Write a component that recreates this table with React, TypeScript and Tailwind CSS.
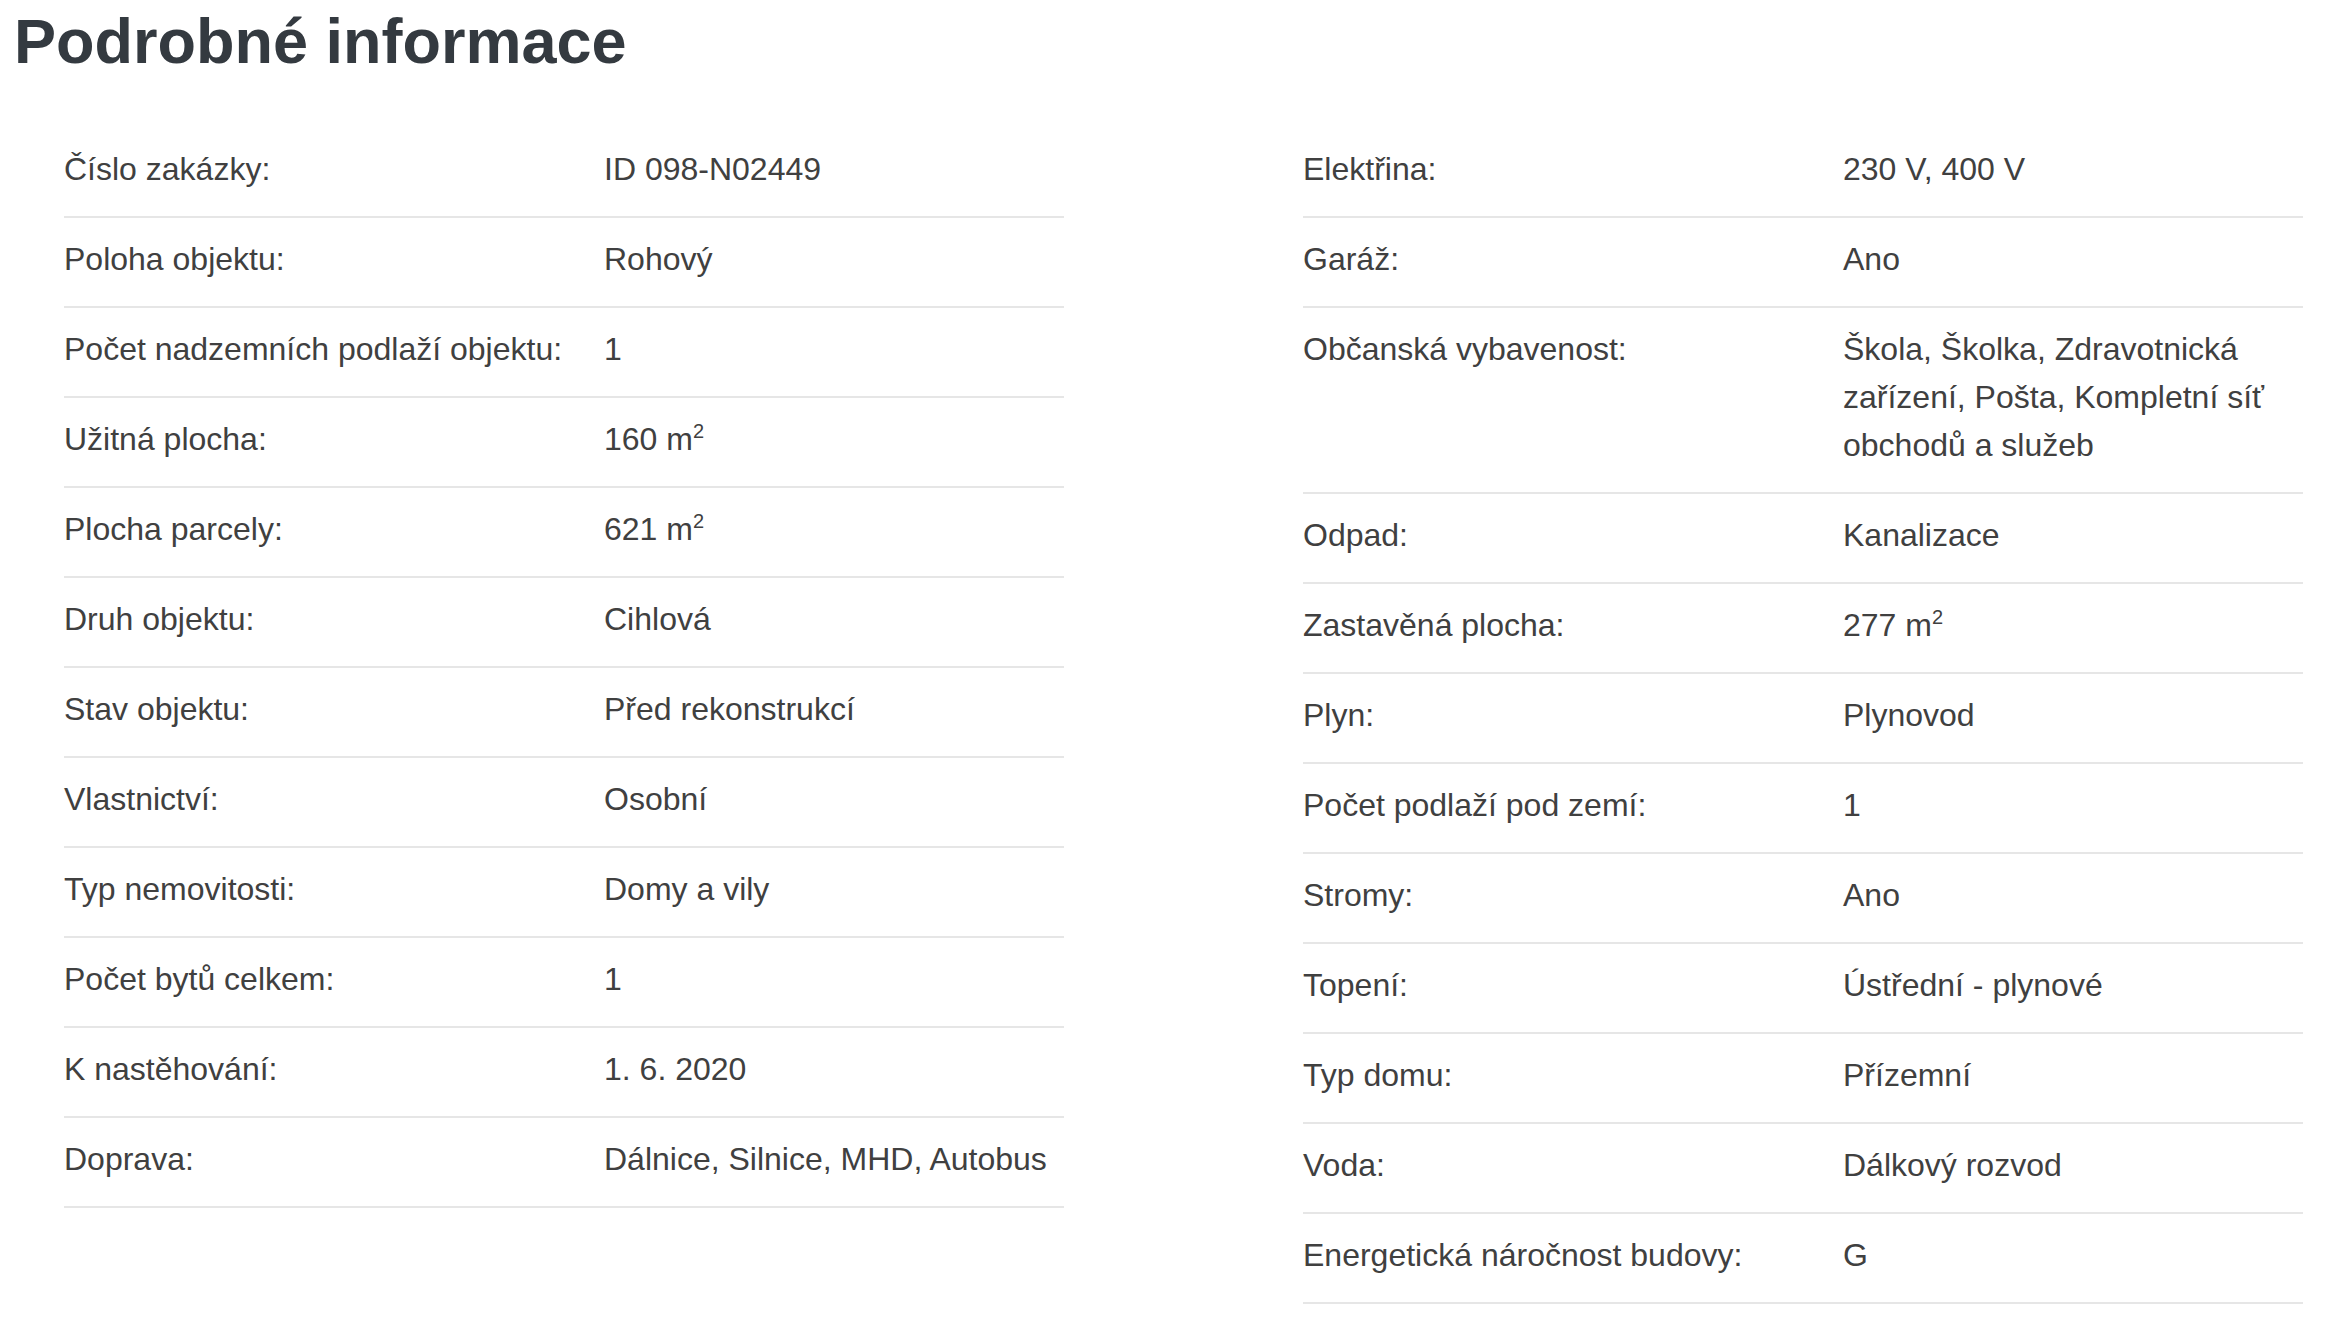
import type { ReactNode } from "react";

type Row = {
	label: string;
	value: ReactNode;
};

const M2 = (n: number) => (
	<>
		{n} m<sup className="text-[20px] top-[-12px]">2</sup>
	</>
);

const LEFT_ROWS: Row[] = [
	{ label: "Číslo zakázky:", value: "ID 098-N02449" },
	{ label: "Poloha objektu:", value: "Rohový" },
	{ label: "Počet nadzemních podlaží objektu:", value: "1" },
	{ label: "Užitná plocha:", value: M2(160) },
	{ label: "Plocha parcely:", value: M2(621) },
	{ label: "Druh objektu:", value: "Cihlová" },
	{ label: "Stav objektu:", value: "Před rekonstrukcí" },
	{ label: "Vlastnictví:", value: "Osobní" },
	{ label: "Typ nemovitosti:", value: "Domy a vily" },
	{ label: "Počet bytů celkem:", value: "1" },
	{ label: "K nastěhování:", value: "1. 6. 2020" },
	{ label: "Doprava:", value: "Dálnice, Silnice, MHD, Autobus" },
];

const RIGHT_ROWS: Row[] = [
	{ label: "Elektřina:", value: "230 V, 400 V" },
	{ label: "Garáž:", value: "Ano" },
	{
		label: "Občanská vybavenost:",
		value: "Škola, Školka, Zdravotnická zařízení, Pošta, Kompletní síť obchodů a služeb",
	},
	{ label: "Odpad:", value: "Kanalizace" },
	{ label: "Zastavěná plocha:", value: M2(277) },
	{ label: "Plyn:", value: "Plynovod" },
	{ label: "Počet podlaží pod zemí:", value: "1" },
	{ label: "Stromy:", value: "Ano" },
	{ label: "Topení:", value: "Ústřední - plynové" },
	{ label: "Typ domu:", value: "Přízemní" },
	{ label: "Voda:", value: "Dálkový rozvod" },
	{ label: "Energetická náročnost budovy:", value: "G" },
];

const InfoTable = ({ rows }: { rows: Row[] }) => {
	return (
		<div className="w-[1000px] flex flex-col">
			{rows.map((row) => (
				<div
					key={row.label}
					className="grid grid-cols-[540px_1fr] pt-[17px] pb-[23px] border-b-2 border-[#e6e6e6]"
				>
					<div>{row.label}</div>
					<div className="pr-2">{row.value}</div>
				</div>
			))}
		</div>
	);
};

const App = () => {
	return (
		<div
			className="w-[2338px] min-h-[1330px] bg-white text-[#404040] text-[32px] leading-[48px]"
			style={{ fontFamily: '"Liberation Sans", Arial, sans-serif' }}
		>
			<h1 className="pl-[14px] pt-[4px] text-[63px] leading-[74px] font-bold text-[#343a40]">
				Podrobné informace
			</h1>

			{/* Two column detail tables */}
			<div className="flex items-start gap-[239px] pl-[64px] mt-[50px]">
				<InfoTable rows={LEFT_ROWS} />
				<InfoTable rows={RIGHT_ROWS} />
			</div>
		</div>
	);
};

export default App;
